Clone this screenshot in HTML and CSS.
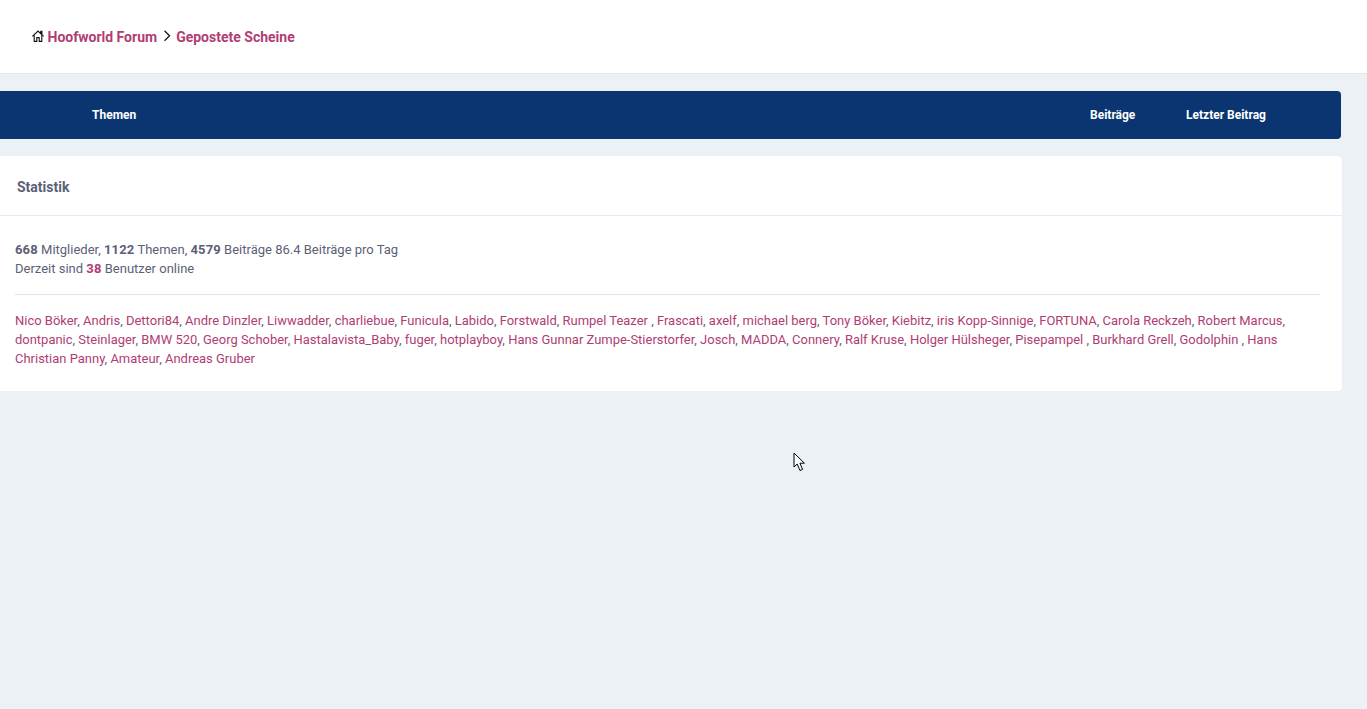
FILE: index.html
```html
<!DOCTYPE html>
<html lang="en">
<head>
    <meta charset="UTF-8">
    <meta name="viewport" content="width=device-width, initial-scale=1.0">
    <title>Gepostete Scheine</title>
    <link rel="stylesheet" href="styles.css">
</head>
<body>
    <div class="topbar">
        <svg class="home-icon" viewBox="0 0 12 12" width="12" height="12">
            <path d="M0.4 6.4 L6 1 L11.6 6.4 M8.8 3.2 V1.4 H9.9 V4.4 M2.2 5.2 V11.4 H4.8 V7.6 H7.2 V11.4 H9.8 V5.2" fill="none" stroke="#111" stroke-width="1.1"/>
        </svg>
        <a class="crumb" href="#">Hoofworld Forum</a>
        <svg class="crumb-sep" viewBox="0 0 8 12" width="8" height="12">
            <path d="M1.5 0.8 L6.6 5.8 L1.5 10.8" fill="none" stroke="#111" stroke-width="1.2"/>
        </svg>
        <a class="crumb" href="#">Gepostete Scheine</a>
    </div>

    <div class="content">
        <div class="table-head">
            <span class="col-topics">Themen</span>
            <span class="col-posts">Beiträge</span>
            <span class="col-last">Letzter Beitrag</span>
        </div>

        <div class="card">
            <div class="card-title">Statistik</div>
            <div class="card-body">
                <p class="stats">
                    <span><b>668</b> Mitglieder, <b>1122</b> Themen, <b>4579</b> Beiträge 86.4 Beiträge pro Tag</span><br>
                    <span>Derzeit sind <b class="hot">38</b> Benutzer online</span>
                </p>
                <hr class="divider">
                <p class="online">
                    <span><a href="#">Nico Böker</a>,</span>
                    <span><a href="#">Andris</a>,</span>
                    <span><a href="#">Dettori84</a>,</span>
                    <span><a href="#">Andre Dinzler</a>,</span>
                    <span><a href="#">Liwwadder</a>,</span>
                    <span><a href="#">charliebue</a>,</span>
                    <span><a href="#">Funicula</a>,</span>
                    <span><a href="#">Labido</a>,</span>
                    <span><a href="#">Forstwald</a>,</span>
                    <span><a href="#">Rumpel Teazer </a>,</span>
                    <span><a href="#">Frascati</a>,</span>
                    <span><a href="#">axelf</a>,</span>
                    <span><a href="#">michael berg</a>,</span>
                    <span><a href="#">Tony Böker</a>,</span>
                    <span><a href="#">Kiebitz</a>,</span>
                    <span><a href="#">iris Kopp-Sinnige</a>,</span>
                    <span><a href="#">FORTUNA</a>,</span>
                    <span><a href="#">Carola Reckzeh</a>,</span>
                    <span><a href="#">Robert Marcus</a>,</span>
                    <span><a href="#">dontpanic</a>,</span>
                    <span><a href="#">Steinlager</a>,</span>
                    <span><a href="#">BMW 520</a>,</span>
                    <span><a href="#">Georg Schober</a>,</span>
                    <span><a href="#">Hastalavista_Baby</a>,</span>
                    <span><a href="#">fuger</a>,</span>
                    <span><a href="#">hotplayboy</a>,</span>
                    <span><a href="#">Hans Gunnar Zumpe-Stierstorfer</a>,</span>
                    <span><a href="#">Josch</a>,</span>
                    <span><a href="#">MADDA</a>,</span>
                    <span><a href="#">Connery</a>,</span>
                    <span><a href="#">Ralf Kruse</a>,</span>
                    <span><a href="#">Holger Hülsheger</a>,</span>
                    <span><a href="#">Pisepampel </a>,</span>
                    <span><a href="#">Burkhard Grell</a>,</span>
                    <span><a href="#">Godolphin </a>,</span>
                    <span><a href="#">Hans</a></span>
                    <span><a href="#">Christian Panny</a>,</span>
                    <span><a href="#">Amateur</a>,</span>
                    <span><a href="#">Andreas Gruber</a></span>
                </p>
            </div>
        </div>
    </div>

    <!-- mouse pointer caught in the screenshot -->
    <svg class="pointer" viewBox="0 0 13 20" width="13" height="20">
        <path d="M1 1 V15 L4.2 12 L7 18.5 L9.6 17.4 L6.9 11.2 H11.4 Z" fill="#fff" stroke="#000" stroke-width="1"/>
    </svg>
</body>
</html>
```

FILE: styles.css
```css
html, body {
    height: 100%;
}
body {
    margin: 0;
    overflow: hidden;
    background-color: #ecf1f6;
    font-family: Roboto, sans-serif;
    font-size: 13px;
    line-height: 19px;
    color: #5c5f77;
}
a {
    color: #b03d74;
    text-decoration: none;
}
.topbar {
    display: flex;
    align-items: center;
    height: 74px;
    padding-left: 32px;
    background-color: #fff;
    border-bottom: 1px solid #e4e8ef;
    box-sizing: border-box;
}
.home-icon {
    margin: 0 3.5px 2px 0;
}
.crumb {
    padding-top: 2px;
    font-size: 14px;
    font-weight: 700;
}
.crumb-sep {
    margin: 0 5px 2px 6px;
}
.content {
    padding: 17px 26px 0 0;
}
.table-head {
    display: flex;
    align-items: center;
    height: 48px;
    padding-left: 92px;
    background-color: #0a3570;
    border-radius: 0 4px 4px 0;
    color: #fff;
    font-size: 12px;
    font-weight: 700;
}
.col-topics {
    flex: 1;
}
.col-posts {
    width: 96px;
}
.col-last {
    width: 155px;
}
.card {
    margin: 17px -1px 0 0;
    background-color: #fff;
    border-radius: 0 4px 4px 0;
    box-shadow: 0 0 1px #d5dbe6;
}
.card-title {
    height: 60px;
    padding-left: 17px;
    border-bottom: 1px solid #e6e9f1;
    box-sizing: border-box;
    font-size: 14px;
    font-weight: 700;
    line-height: 63px;
}
.card-body {
    padding: 24px 22px 15px 15px;
}
.stats {
    margin: 0;
}
.stats b {
    font-weight: 700;
    letter-spacing: 0.15px;
}
.stats .hot {
    color: #b03d74;
}
.divider {
    height: 1px;
    margin: 16px 0 16px;
    border: 0;
    background-color: #e4e4e7;
}
.online {
    margin: 0;
    padding-bottom: 8px;
    font-size: 12.985px;
}
.pointer {
    position: absolute;
    left: 793px;
    top: 452px;
}
```
